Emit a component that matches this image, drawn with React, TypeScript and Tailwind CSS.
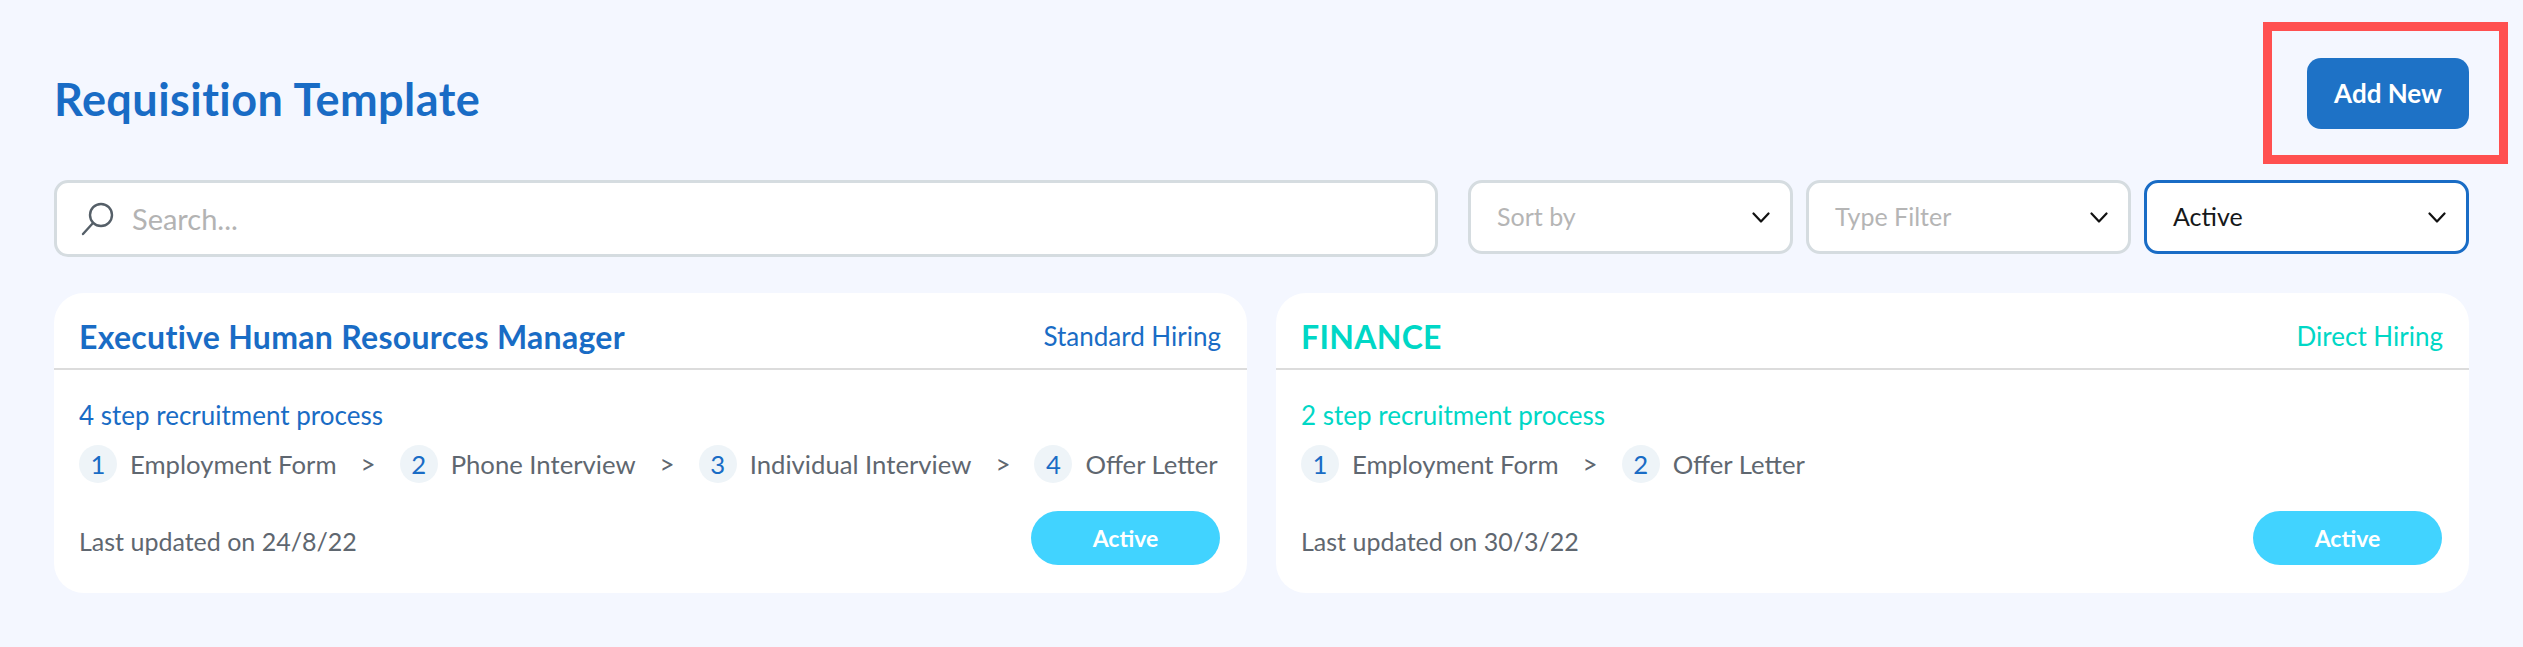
const templates = [
  {
    title: 'Executive Human Resources Manager',
    type: 'Standard Hiring',
    color: 'text-[#196cc5]',
    steps: ['Employment Form', 'Phone Interview', 'Individual Interview', 'Offer Letter'],
    updated: '24/8/22',
  },
  {
    title: 'FINANCE',
    type: 'Direct Hiring',
    color: 'text-[#00d7c6]',
    steps: ['Employment Form', 'Offer Letter'],
    updated: '30/3/22',
  },
];

function Chevron() {
  return (
    <svg width="18" height="11" viewBox="0 0 18 11" fill="none" stroke="#111" strokeWidth="2.2" strokeLinecap="round" strokeLinejoin="round">
      <path d="M1.5 1.5 9 9.5l7.5-8" />
    </svg>
  );
}

function Select({ label, active }: { label: string; active?: boolean }) {
  return (
    <button
      className={`flex h-[74px] w-[325px] items-center justify-between rounded-[14px] border-[3px] bg-white pl-[26px] pr-[20px] text-[25px] ${
        active ? 'border-[#196cc5] text-[#16181a]' : 'border-[#d5dce0] text-[#b5b5b5]'
      }`}
    >
      <span>{label}</span>
      <Chevron />
    </button>
  );
}

export default function App() {
  return (
    <div className="min-h-[647px] bg-[#f4f7ff] px-[54px] pt-[58px] font-['Lato','Liberation_Sans',sans-serif]">
      {/* Title */}
      <div className="flex h-[71px] items-center justify-between">
        <h1 className="pt-[12px] text-[45px] leading-[59px] font-bold tracking-[0.45px] text-[#196cc5]">Requisition Template</h1>
        <div className="relative">
          <button className="h-[71px] w-[162px] rounded-[14px] bg-[#1e72c6] text-[26px] font-bold text-white">
            Add New
          </button>
          <div className="absolute -top-[36px] -right-[39px] -bottom-[35px] -left-[44px] border-[9px] border-[#ff5050]" />
        </div>
      </div>

      {/* Filters */}
      <div className="mt-[51px] flex items-start">
        <div className="flex h-[77px] flex-1 items-center gap-[17px] rounded-[14px] border-[3px] border-[#d5dce0] bg-white pl-[24px]">
          <svg width="34" height="34" viewBox="0 0 34 34" fill="none" stroke="#555f68" strokeWidth="2.4" strokeLinecap="round">
            <circle cx="20" cy="13" r="11" />
            <path d="M12 21 2 32" />
          </svg>
          <input
            placeholder="Search..."
            className="flex-1 bg-transparent text-[29px] outline-none placeholder:text-[#b3b3b3]"
          />
        </div>
        <div className="ml-[30px] flex gap-[13px]">
          <Select label="Sort by" />
          <Select label="Type Filter" />
          <Select label="Active" active />
        </div>
      </div>

      {/* Cards */}
      <div className="mt-[36px] grid grid-cols-2 gap-[29px]">
        {templates.map((t) => (
          <div key={t.title} className="h-[300px] rounded-[30px] bg-white">
            <div className="flex h-[77px] items-center justify-between border-b-2 border-[#dcdcdc] pt-[12px] pr-[26px] pl-[25px]">
              <h2 className={`text-[32px] leading-[40px] font-bold tracking-[0.3px] ${t.color}`}>{t.title}</h2>
              <span className={`text-[26px] ${t.color}`}>{t.type}</span>
            </div>
            <div className="pt-[29px] pr-[27px] pl-[25px]">
              <p className={`text-[26px] leading-[32px] ${t.color}`}>{t.steps.length} step recruitment process</p>
              <div className="mt-[14px] flex items-center text-[25.7px] leading-[38px] whitespace-nowrap text-[#5f6770]">
                {t.steps.map((step, i) => (
                  <div key={step} className="flex shrink-0 items-center">
                    {i > 0 && <span className="mx-[24px] text-[26px]">&gt;</span>}
                    <span className="flex h-[38px] w-[38px] items-center justify-center rounded-full bg-[#eef4f8] text-[#196cc5]">
                      {i + 1}
                    </span>
                    <span className="ml-[13px]">{step}</span>
                  </div>
                ))}
              </div>
              <div className="mt-[28px] flex items-center justify-between">
                <span className="pt-[8px] text-[25px] text-[#5f6770]">Last updated on {t.updated}</span>
                <span className="flex h-[54px] w-[189px] items-center justify-center rounded-full bg-[#41d3ff] text-[23px] font-bold text-white">
                  Active
                </span>
              </div>
            </div>
          </div>
        ))}
      </div>
    </div>
  );
}
